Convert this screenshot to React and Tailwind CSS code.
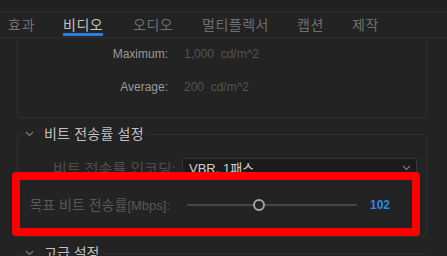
import React from "react";

const FONT = { fontFamily: '"Liberation Sans", "Noto Sans CJK KR", sans-serif' };

function Chevron({ className = "" }) {
  return (
    <svg width="9" height="6" viewBox="0 0 9 6" className={className}>
      <polyline points="1,1 4.5,4.5 8,1" fill="none" stroke="#7a7a7a" strokeWidth="1.2" />
    </svg>
  );
}

const tabs = [
  { t: "효과", w: "w-[55px]" },
  { t: "비디오", w: "w-[70px]" },
  { t: "오디오", w: "w-[69px]" },
  { t: "멀티플렉서", w: "w-[95px]" },
  { t: "캡션", w: "w-[55px]" },
  { t: "제작", w: "w-[55px]" },
];

export default function App() {
  return (
    <div className="relative w-[447px] h-[256px] overflow-hidden bg-[#232323]" style={FONT}>
      {/* top strip */}
      <div className="h-[12px] bg-[#212121] border-b border-[#2e2e2e]" />
      {/* tabs */}
      <div className="h-[26px] border-b border-[#2e2e2e] flex items-stretch pl-[8px]">
        {tabs.map((tab, i) => (
          <div key={tab.t} className={"flex items-stretch " + tab.w}>
            <div
              className={
                "relative flex items-center text-[14px] leading-none tracking-[0.5px] " +
                (i === 1 ? "text-[#c4c4c4]" : "text-[#6f6f6f]")
              }
            >
              {tab.t}
              {i === 1 && (
                <div className="absolute left-0 right-0 bottom-[1px] h-[3px] bg-[#2b7fe0]" />
              )}
            </div>
          </div>
        ))}
      </div>

      {/* HDR box (continues from above) */}
      <div className="ml-[17px] w-[410px] h-[80px] border border-t-0 border-[#303030] rounded-b-[4px] pt-[7px] flex flex-col gap-[15px]">
        <div className="h-[18px] flex items-center text-[12px]">
          <div className="w-[150px] text-right text-[#9a9a9a]">Maximum:</div>
          <div className="ml-[16px] text-[#545454]">1,000&nbsp;&nbsp;cd/m^2</div>
        </div>
        <div className="h-[18px] flex items-center text-[12px]">
          <div className="w-[150px] text-right text-[#9a9a9a]">Average:</div>
          <div className="ml-[16px] text-[#545454]">200&nbsp;&nbsp;cd/m^2</div>
        </div>
      </div>

      {/* bitrate fieldset */}
      <fieldset className="mt-[6px] ml-[17px] w-[410px] border border-[#303030] rounded-[4px] pb-[21px]">
        <legend className="ml-[5px] pr-[4px] h-[20px] flex items-center">
          <Chevron className="mr-[10px] ml-[2px]" />
          <span className="text-[14px] text-[#c2c2c2] leading-none tracking-[0.2px]">비트 전송률 설정</span>
        </legend>
        <div className="pt-[14px] flex flex-col gap-[17px]">
          <div className="h-[20px] flex items-center">
            <div className="w-[158px] text-right text-[15px] text-[#4e4e4e] leading-none whitespace-nowrap">비트 전송률 인코딩:</div>
            <div className="ml-[6px] w-[235px] h-[20px] bg-[#1b1b1b] border border-[#363636] rounded-[2px] flex items-center justify-between pl-[6px] pr-[5px]">
              <span className="text-[13px] text-[#cfcfcf] leading-none">VBR, 1패스</span>
              <Chevron />
            </div>
          </div>
          <div className="h-[20px] flex items-center">
            <div className="w-[152px] text-right text-[14px] text-[#585858] leading-none whitespace-nowrap">
              목표 비트 전송률<span className="text-[13px]">[Mbps]:</span>
            </div>
            <div className="ml-[17px] w-[170px] h-[12px] relative flex items-center">
              <div className="w-full h-[2px] bg-[#474747]" />
              <div className="absolute left-[66px] top-0 w-[12px] h-[12px] rounded-full border-2 border-[#a3a3a3] bg-[#232323]" />
            </div>
            <div className="ml-[13px] text-[12px] text-[#2f88e6] font-semibold">102</div>
          </div>
        </div>
      </fieldset>

      {/* advanced */}
      <fieldset className="mt-[6px] ml-[17px] w-[410px] border border-[#303030] rounded-[4px] h-[40px]">
        <legend className="ml-[5px] pr-[4px] h-[20px] flex items-center">
          <Chevron className="mr-[10px] ml-[2px]" />
          <span className="text-[14px] text-[#c2c2c2] leading-none">고급 설정</span>
        </legend>
      </fieldset>

      {/* red annotation box */}
      <div className="absolute left-[12px] top-[172px] w-[408px] h-[64px] border-[8px] border-[#ff0000] rounded-[4px]" />
    </div>
  );
}
